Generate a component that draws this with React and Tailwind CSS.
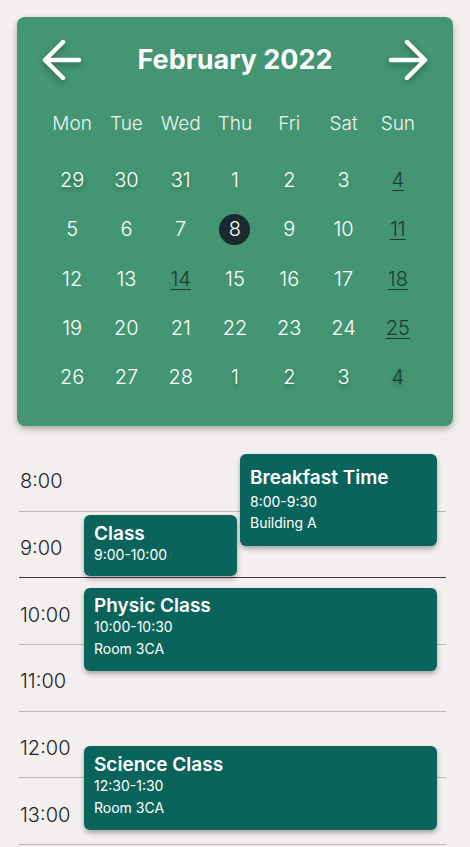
import React from "react";

const weekdays = ["Mon", "Tue", "Wed", "Thu", "Fri", "Sat", "Sun"];
const weeks = [
  [[29, "prev"], [30, "prev"], [31, "prev"], [1], [2], [3], [4, "sun"]],
  [[5], [6], [7], [8, "sel"], [9], [10], [11, "sun"]],
  [[12], [13], [14, "sun"], [15], [16], [17], [18, "sun"]],
  [[19], [20], [21], [22], [23], [24], [25, "sun"]],
  [[26], [27], [28], [1, "next"], [2, "next"], [3, "next"], [4, "nextdark"]],
];

function Arrow({ dir }) {
  return (
    <svg
      width="40"
      height="40"
      viewBox="0 0 40 40"
      className="[filter:drop-shadow(0_3px_3px_rgba(0,0,0,0.3))]"
      style={{ transform: dir === "right" ? "scaleX(-1)" : undefined }}
    >
      <path
        d="M3 20 H37 M21 2 L3 20 L21 38"
        fill="none"
        stroke="white"
        strokeWidth="4.5"
        strokeLinecap="round"
        strokeLinejoin="round"
      />
    </svg>
  );
}

function Day({ n, kind }) {
  const base = "flex h-[49.3px] items-center justify-center text-[20px] font-light";
  if (kind === "sel") {
    return (
      <div className={base}>
        <span className="flex h-[31px] w-[31px] items-center justify-center rounded-full bg-[#1a2a2e] text-white">
          {n}
        </span>
      </div>
    );
  }
  if (kind === "sun") {
    return (
      <div className={base}>
        <span className="text-[#1d3a36] underline decoration-[1px] underline-offset-[3px]">{n}</span>
      </div>
    );
  }
  if (kind === "nextdark") {
    return (
      <div className={base}>
        <span className="text-[#1d3a36] [text-shadow:0_3px_4px_rgba(0,0,0,0.3)]">{n}</span>
      </div>
    );
  }
  if (kind === "prev" || kind === "next") {
    return (
      <div className={base}>
        <span className="text-white [text-shadow:0_3px_4px_rgba(0,0,0,0.3)]">{n}</span>
      </div>
    );
  }
  return (
    <div className={base}>
      <span className="text-white">{n}</span>
    </div>
  );
}

const hours = ["8:00", "9:00", "10:00", "11:00", "12:00", "13:00"];

export default function App() {
  return (
    <div className="min-h-[847px] bg-[#f3efee] pt-[17px] font-['Inter',sans-serif] overflow-hidden">
      <div className="mx-[17px] rounded-[8px] bg-[#439573] pt-[18px] pb-[24px] shadow-[0_3px_6px_rgba(0,0,0,0.3)]">
        <div className="flex h-[50px] items-center justify-between px-[25px]">
          <Arrow dir="left" />
          <div className="text-[27px] font-bold text-white">February 2022</div>
          <Arrow dir="right" />
        </div>
        <div className="mx-[28px] mt-[19px] grid h-[40px] grid-cols-7 items-center">
          {weekdays.map((d) => (
            <div key={d} className="text-center text-[19px] font-light text-[#f2f2f2]">
              {d}
            </div>
          ))}
        </div>
        <div className="mx-[28px] mt-[11.5px] grid grid-cols-7">
          {weeks.flat().map(([n, kind], i) => (
            <Day key={i} n={n} kind={kind} />
          ))}
        </div>
      </div>

      <div className="relative mt-[19px]">
        {hours.map((h, i) => (
          <div
            key={h}
            className={
              "ml-[19px] mr-[24px] flex h-[66.7px] items-center border-b " +
              (i === 1 ? "border-[#3b3b3b]" : "border-[#bdb9b8]")
            }
          >
            <span className="ml-[1px] mt-[7px] text-[20px] font-light text-[#1e1e1e]">{h}</span>
          </div>
        ))}

        <div className="absolute left-[240px] top-[9px] h-[92px] w-[197px] rounded-[6px] bg-[#0b645c] pl-[10px] pt-[12px] text-white shadow-[0_3px_5px_rgba(0,0,0,0.3)]">
          <div className="text-[19px] font-semibold leading-[24px]">Breakfast Time</div>
          <div className="mt-[1px] text-[14px] leading-[21px]">8:00-9:30</div>
          <div className="text-[14px] leading-[21px]">Building A</div>
        </div>

        <div className="absolute left-[84px] top-[70px] h-[61px] w-[153px] rounded-[6px] bg-[#0b645c] pl-[10px] pt-[7px] text-white shadow-[0_3px_5px_rgba(0,0,0,0.3)]">
          <div className="text-[19px] font-semibold leading-[24px]">Class</div>
          <div className="text-[14px] leading-[18px]">9:00-10:00</div>
        </div>

        <div className="absolute left-[84px] top-[143px] h-[83px] w-[353px] rounded-[6px] bg-[#0b645c] pl-[10px] pt-[6px] text-white shadow-[0_3px_5px_rgba(0,0,0,0.3)]">
          <div className="text-[19px] font-semibold leading-[24px]">Physic Class</div>
          <div className="text-[14px] leading-[18px]">10:00-10:30</div>
          <div className="mt-[4px] text-[14px] leading-[18px]">Room 3CA</div>
        </div>

        <div className="absolute left-[84px] top-[301px] h-[84px] w-[353px] rounded-[6px] bg-[#0b645c] pl-[10px] pt-[7px] text-white shadow-[0_3px_5px_rgba(0,0,0,0.3)]">
          <div className="text-[19px] font-semibold leading-[24px]">Science Class</div>
          <div className="text-[14px] leading-[18px]">12:30-1:30</div>
          <div className="mt-[4px] text-[14px] leading-[18px]">Room 3CA</div>
        </div>
      </div>
    </div>
  );
}
